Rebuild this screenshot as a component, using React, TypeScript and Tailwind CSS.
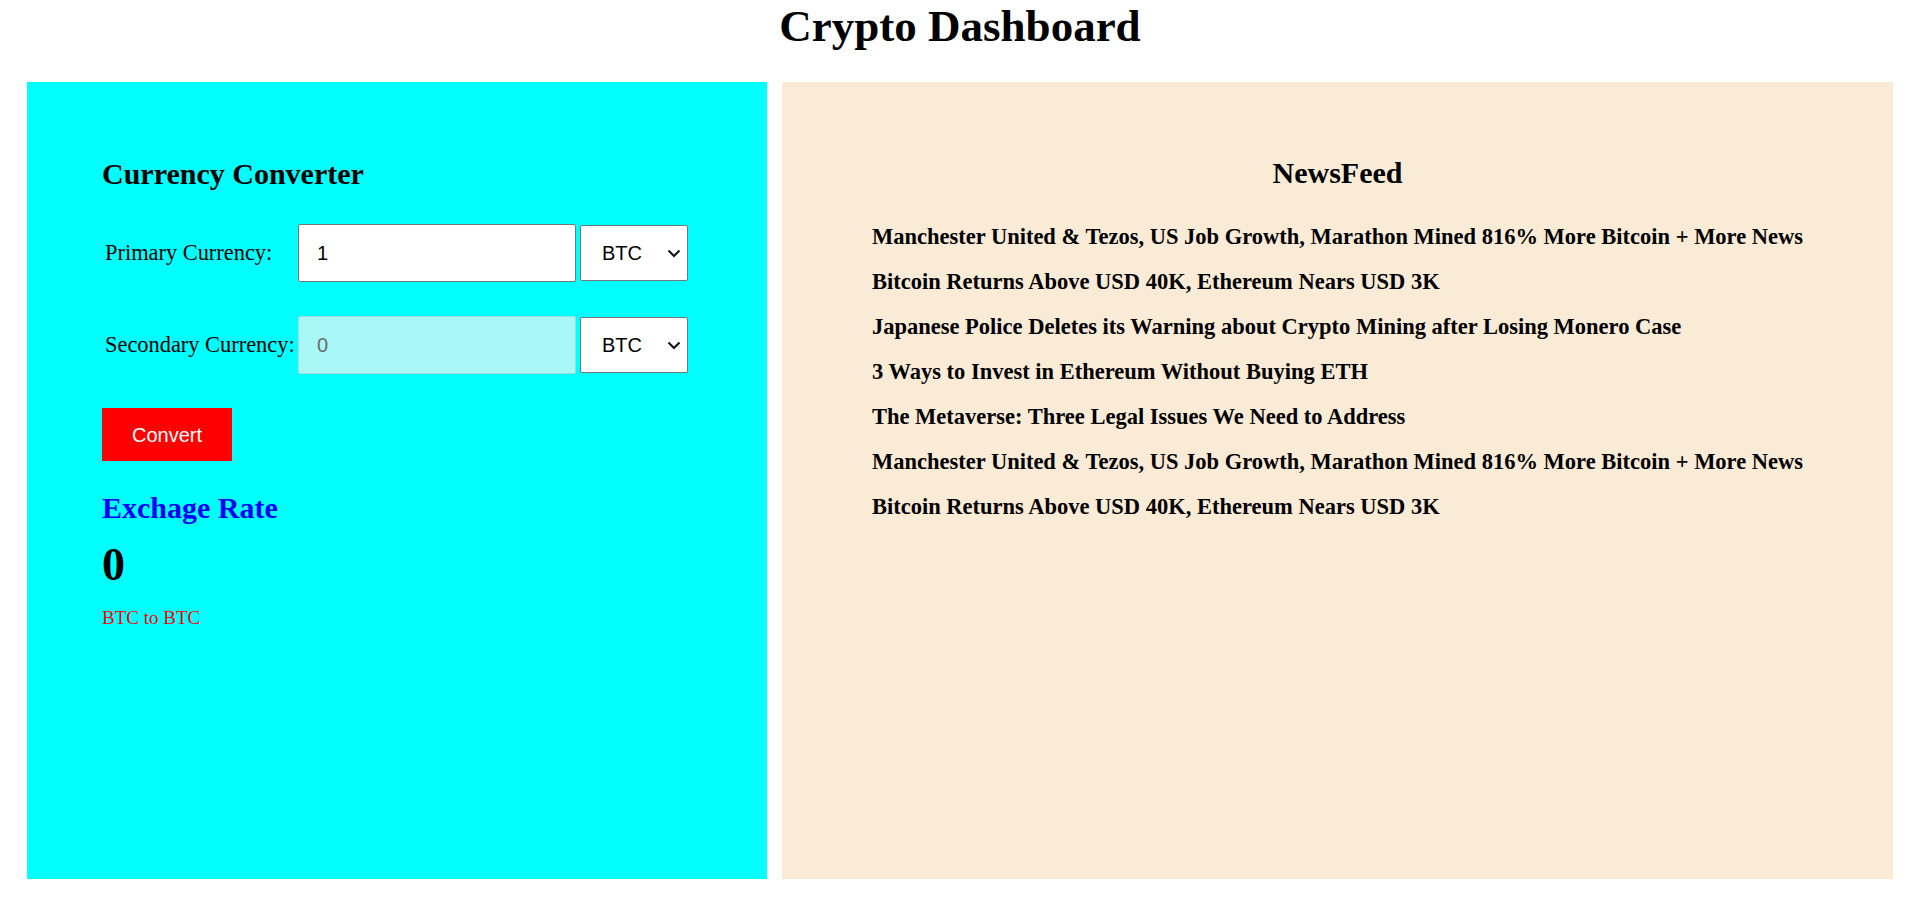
import { useState } from 'react';

const serif = "font-['Liberation_Serif','Times_New_Roman',serif]";
const sans = "font-['Liberation_Sans',Arial,sans-serif]";

const headlines = [
  'Manchester United & Tezos, US Job Growth, Marathon Mined 816% More Bitcoin + More News',
  'Bitcoin Returns Above USD 40K, Ethereum Nears USD 3K',
  'Japanese Police Deletes its Warning about Crypto Mining after Losing Monero Case',
  '3 Ways to Invest in Ethereum Without Buying ETH',
  'The Metaverse: Three Legal Issues We Need to Address',
  'Manchester United & Tezos, US Job Growth, Marathon Mined 816% More Bitcoin + More News',
  'Bitcoin Returns Above USD 40K, Ethereum Nears USD 3K',
];

function CurrencySelect({ value, onChange }: { value: string; onChange: (v: string) => void }) {
  return (
    <div className="relative ml-[4px] h-[56px] w-[108px]">
      <select
        value={value}
        onChange={(e) => onChange(e.target.value)}
        className={`${sans} h-full w-full appearance-none rounded-[2px] border border-[#767676] bg-white pl-[21px] text-[20px] text-black outline-none`}
      >
        <option value="BTC">BTC</option>
        <option value="ETH">ETH</option>
        <option value="USD">USD</option>
      </select>
      {/* dropdown chevron */}
      <svg
        className="pointer-events-none absolute right-[7px] top-[24px]"
        width="14"
        height="9"
        viewBox="0 0 14 9"
        fill="none"
      >
        <path d="M1.5 1.5 L7 7 L12.5 1.5" stroke="#111" strokeWidth="2" />
      </svg>
    </div>
  );
}

export default function App() {
  const [amount, setAmount] = useState('1');
  const [primary, setPrimary] = useState('BTC');
  const [secondary, setSecondary] = useState('BTC');

  return (
    <div className={`${serif} min-h-[924px] bg-white text-black`}>
      <h1 className="text-center text-[45px] font-bold leading-[52px]">Crypto Dashboard</h1>

      <div className="mt-[30px] flex gap-[15px] px-[27px]">
        {/* Currency Converter */}
        <div className="h-[797px] w-[740px] bg-[#00ffff] px-[75px] pt-[75px]">
          <h2 className="text-[30px] font-bold leading-[34px]">Currency Converter</h2>

          <div className="mt-[33px] flex h-[58px] items-center">
            <label className="w-[196px] pl-[3px] text-[22.4px] leading-[26px]">Primary Currency:</label>
            <input
              type="number"
              value={amount}
              onChange={(e) => setAmount(e.target.value)}
              className={`${sans} h-[58px] w-[278px] rounded-[2px] border border-[#767676] bg-white pl-[18px] text-[20px] outline-none`}
            />
            <CurrencySelect value={primary} onChange={setPrimary} />
          </div>

          <div className="mt-[34px] flex h-[58px] items-center">
            <label className="w-[196px] pl-[3px] text-[22.4px] leading-[26px]">Secondary Currency:</label>
            <input
              type="number"
              value="0"
              disabled
              className={`${sans} h-[58px] w-[278px] rounded-[2px] border border-[#9fdcdc] bg-[#aaf7f7] pl-[18px] text-[20px] text-[#6d6d6d] outline-none`}
            />
            <CurrencySelect value={secondary} onChange={setSecondary} />
          </div>

          <button
            className={`${sans} mt-[34px] h-[53px] w-[130px] bg-[#ff0000] text-[20px] text-white`}
          >
            Convert
          </button>

          <h2 className="mt-[30px] text-[30px] font-bold leading-[34px] text-[#0000ff]">Exchage Rate</h2>
          <div className="mt-[14px] text-[46px] font-bold leading-[52px]">0</div>
          <p className="mt-[16px] text-[19px] leading-[22px] text-[#ff0000]">
            {primary} to {secondary}
          </p>
        </div>

        {/* News Feed */}
        <div className="h-[797px] flex-1 bg-[#faebd7] pt-[74px]">
          <h2 className="text-center text-[30px] font-bold leading-[34px]">NewsFeed</h2>
          <div className="mx-auto mt-[34px] flex w-fit flex-col gap-[19px]">
            {headlines.map((title, i) => (
              <p key={i} className="text-[22.5px] font-bold leading-[26px]">
                {title}
              </p>
            ))}
          </div>
        </div>
      </div>
    </div>
  );
}
